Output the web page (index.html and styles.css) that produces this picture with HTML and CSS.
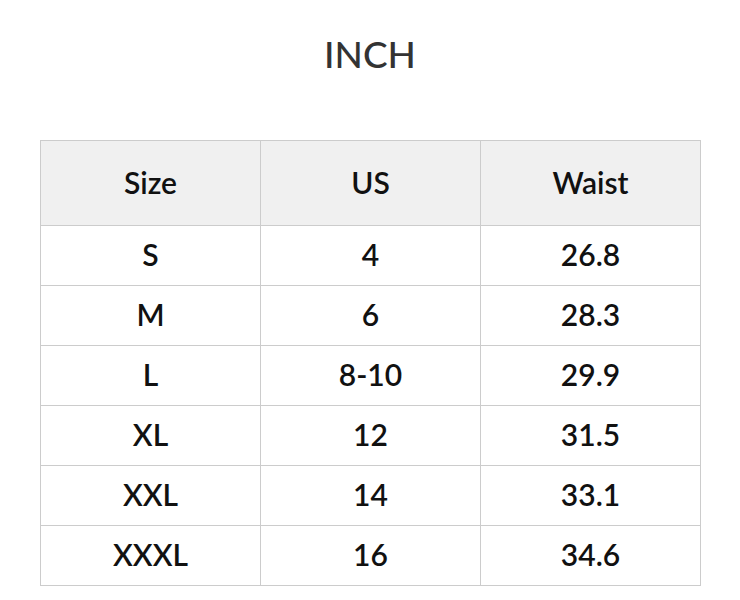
FILE: index.html
```html
<!DOCTYPE html>
<html>
<head>
<meta charset="utf-8">
<link rel="stylesheet" href="styles.css">
</head>
<body>
<div class="page">
  <h1 class="title">INCH</h1>
  <table class="chart">
    <thead>
      <tr><th>Size</th><th>US</th><th>Waist</th></tr>
    </thead>
    <tbody>
      <tr><td>S</td><td>4</td><td>26.8</td></tr>
      <tr><td>M</td><td>6</td><td>28.3</td></tr>
      <tr><td>L</td><td>8-10</td><td>29.9</td></tr>
      <tr><td>XL</td><td>12</td><td>31.5</td></tr>
      <tr><td>XXL</td><td>14</td><td>33.1</td></tr>
      <tr><td>XXXL</td><td>16</td><td>34.6</td></tr>
    </tbody>
  </table>
</div>
</body>
</html>
```
FILE: styles.css
```css
html, body {
  margin: 0;
  padding: 0;
  background: #fff;
}
.page {
  width: 740px;
  padding: 0 40px;
  box-sizing: border-box;
  font-family: Lato, "Open Sans", sans-serif;
}
.title {
  margin: 0;
  height: 140px;
  padding-top: 32px;
  box-sizing: border-box;
  text-align: center;
  font-size: 37px;
  font-weight: 500;
  color: #333;
  line-height: 44px;
}
.chart {
  width: 661px;
  border-collapse: collapse;
  table-layout: fixed;
}
.chart th, .chart td {
  border: 1px solid #ccc;
  text-align: center;
  font-size: 30px;
  font-weight: 600;
  color: #111;
  padding: 0 0 3px;
}
.chart th {
  background: #f0f0f0;
  height: 81px;
}
.chart td {
  height: 56px;
}
```
